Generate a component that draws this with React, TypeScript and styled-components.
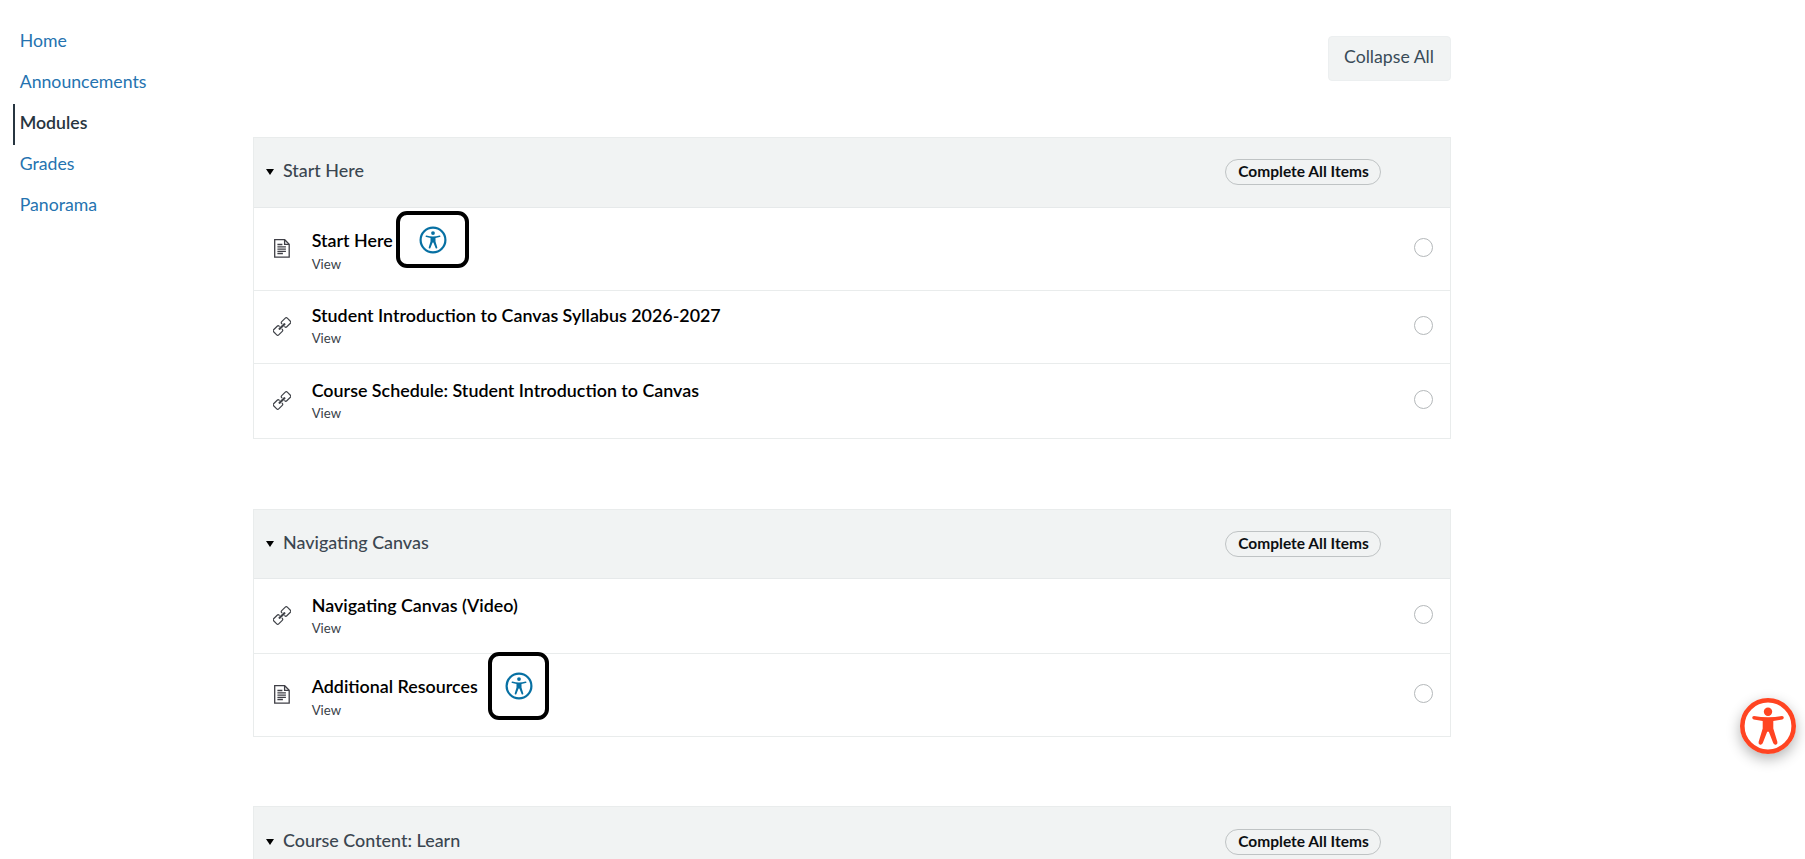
import React from 'react';
import styled, { createGlobalStyle } from 'styled-components';

const GlobalStyle = createGlobalStyle`
  *, *::before, *::after { box-sizing: border-box; }
  body {
    margin: 0;
    background: #fff;
    color: #273540;
    font-family: Lato, "Liberation Sans", sans-serif;
    font-size: 17.6px;
    overflow: hidden;
  }
`;

const Page = styled.div`
  display: flex;
  align-items: flex-start;
  height: 859px;
  overflow: hidden;
`;

const Sidebar = styled.nav`
  flex: 0 0 252.5px;
  display: flex;
  flex-direction: column;
  padding: 22.5px 0 0 13px;
`;

const NavLink = styled.a<{ $active?: boolean }>`
  display: flex;
  align-items: center;
  height: 40.9px;
  padding: 0 0 4.5px 4.7px;
  border-left: 2px solid ${p => (p.$active ? '#273540' : 'transparent')};
  color: ${p => (p.$active ? '#273540' : '#2573b0')};
  font-size: 17.7px;
  font-weight: ${p => (p.$active ? 600 : 400)};
  text-decoration: none;
`;

const Content = styled.main`
  width: 1198px;
  padding-top: 36px;
`;

const Toolbar = styled.div`
  display: flex;
  justify-content: flex-end;
  margin-bottom: 56px;
`;

const CollapseButton = styled.button`
  width: 123px;
  height: 45px;
  padding: 0 0 4px;
  border: 1px solid #eceff0;
  border-radius: 4px;
  background: #f1f3f3;
  color: #394b58;
  font: inherit;
  font-size: 17.7px;
`;

const Module = styled.section<{ $gap: number }>`
  margin-bottom: ${p => p.$gap}px;
  border: 1px solid #e9ecec;
`;

const ModuleHeader = styled.header<{ $height: number; $lift: number }>`
  display: flex;
  align-items: center;
  height: ${p => p.$height}px;
  padding: 0 68.5px ${p => p.$lift}px 12.5px;
  background: #f1f3f3;
  border-bottom: 1px solid #e6e9ea;
`;

const Caret = styled.svg`
  width: 8px;
  height: 6px;
  margin-right: 9px;
`;

const ModuleName = styled.h2`
  flex: 1;
  margin: 0;
  padding-bottom: 3.5px;
  color: #3b4650;
  font-size: 17.93px;
  font-weight: 500;
  line-height: 22px;
`;

const Pill = styled.span`
  display: flex;
  align-items: center;
  justify-content: center;
  width: 156px;
  height: 26px;
  padding: 0 0 2px 1px;
  border: 1px solid #bfc3c4;
  border-radius: 13px;
  color: #0c0f12;
  font-size: 15.5px;
  font-weight: 700;
`;

const ItemRow = styled.div<{ $height: number }>`
  position: relative;
  display: flex;
  align-items: center;
  height: ${p => p.$height}px;
  padding: 0 17px 0 19.5px;
  background: #fff;

  & + & { border-top: 1px solid #e9ecec; }
`;

const IconSlot = styled.span`
  display: flex;
  justify-content: center;
  width: 18px;
  margin: 0 20.7px 2px 0;
`;

const ItemText = styled.div<{ $top: number }>`
  flex: 1;
  align-self: flex-start;
  padding-top: ${p => p.$top}px;
`;

const ItemTitle = styled.div`
  color: #000;
  font-size: 17.88px;
  font-weight: 600;
  line-height: 22px;
`;

const Requirement = styled.div<{ $tall: boolean }>`
  margin-top: ${p => (p.$tall ? 4 : 3)}px;
  color: #394148;
  font-size: 13.2px;
  line-height: 18px;
`;

const StatusCircle = styled.span`
  width: 19px;
  height: 19px;
  margin-bottom: 3px;
  border: 1.5px solid #b4b8ba;
  border-radius: 50%;
`;

const Highlight = styled.span<{ $x: number; $y: number; $w: number; $h: number }>`
  position: absolute;
  z-index: 1;
  left: ${p => p.$x - 0.5}px;
  top: ${p => p.$y}px;
  width: ${p => p.$w}px;
  height: ${p => p.$h}px;
  display: flex;
  align-items: center;
  justify-content: center;
  border: 4px solid #000;
  border-radius: 11px;
  background: #fff;
`;

const AccessibilityButton = styled.button`
  position: fixed;
  right: 9px;
  top: 697.5px;
  width: 56px;
  height: 56px;
  padding: 0;
  border: 0;
  border-radius: 50%;
  background: #fff;
  box-shadow: 0 5px 14px rgba(0, 0, 0, 0.3);

  svg { display: block; }
`;

const PageIcon = () => (
  <svg width="16" height="19" viewBox="0 0 16 19" fill="none" stroke="#3f3f46" strokeWidth="1.3">
    <path d="M.7.7h10l4.5 4.5v13H.7z" />
    <path d="M10.6.9v4.4h4.4" />
    <path d="M3.4 5.5h5M3.4 7.8h8.5M3.4 10.1h8.5M3.4 12.4h8.5M3.4 14.5h5.5" strokeWidth="1.3" />
  </svg>
);

const LinkIcon = () => (
  <svg width="19" height="19" viewBox="0 0 19 19" fill="none" stroke="#3f4248" strokeWidth="1.25" strokeLinejoin="round">
    <g transform="rotate(-45 9.5 9.5)">
      <path d="M7.6 11.2v.6q0 1.5-1.5 1.5H.8q-1.5 0-1.5-1.5V7.2Q-.7 5.7.8 5.7H6.1q1.5 0 1.5 1.5v.6" />
      <path d="M11.4 7.8v-.6q0-1.5 1.5-1.5h5.3q1.5 0 1.5 1.5v4.6q0 1.5-1.5 1.5H12.9q-1.5 0-1.5-1.5v-.6" />
      <path d="M5.6 9h7.8v1H5.6z" />
    </g>
  </svg>
);

const PersonIcon = () => (
  <svg width="28" height="28" viewBox="-14 -14 28 28">
    <circle r="12.4" fill="none" stroke="#0770a3" strokeWidth="2.2" />
    <circle cy="-6.9" r="1.9" fill="#0770a3" />
    <path
      d="M-6.5-4.4Q0-2.7 6.5-4.4Q7.5-4.5 7.4-3.6Q7.3-3.1 6.7-2.9L2.5-2V1.4L4.3 7.4Q4.4 8.4 3.6 8.5Q2.9 8.6 2.6 7.9L.4 2.6H-.4L-2.6 7.9Q-2.9 8.6-3.6 8.5Q-4.4 8.4-4.3 7.4L-2.5 1.4V-2L-6.7-2.9Q-7.3-3.1-7.4-3.6Q-7.5-4.5-6.5-4.4Z"
      fill="#0770a3"
    />
  </svg>
);

type Item = {
  title: string;
  kind: 'page' | 'link';
  height: number;
  top: number;
  mark?: [number, number, number, number];
};

type ModuleData = { name: string; headerHeight: number; lift: number; gap: number; items: Item[] };

const modules: ModuleData[] = [
  {
    name: 'Start Here',
    headerHeight: 70,
    lift: 2,
    gap: 70,
    items: [
      { title: 'Start Here', kind: 'page', height: 82, top: 21, mark: [143, 3, 73, 57] },
      { title: 'Student Introduction to Canvas Syllabus 2026-2027', kind: 'link', height: 73, top: 13 },
      { title: 'Course Schedule: Student Introduction to Canvas', kind: 'link', height: 75, top: 14.5 },
    ],
  },
  {
    name: 'Navigating Canvas',
    headerHeight: 69,
    lift: 0,
    gap: 69,
    items: [
      { title: 'Navigating Canvas (Video)', kind: 'link', height: 74, top: 15 },
      { title: 'Additional Resources', kind: 'page', height: 83, top: 21, mark: [235, -2, 61, 68] },
    ],
  },
  { name: 'Course Content: Learn', headerHeight: 70, lift: 0, gap: 0, items: [] },
];

const navItems = ['Home', 'Announcements', 'Modules', 'Grades', 'Panorama'];

export default function App() {
  return (
    <Page>
      <GlobalStyle />
      <Sidebar>
        {navItems.map(label => (
          <NavLink key={label} $active={label === 'Modules'}>{label}</NavLink>
        ))}
      </Sidebar>
      <Content>
        <Toolbar>
          <CollapseButton>Collapse All</CollapseButton>
        </Toolbar>
        {modules.map(m => (
          <Module key={m.name} $gap={m.gap}>
            <ModuleHeader $height={m.headerHeight} $lift={m.lift}>
              <Caret viewBox="0 0 8 6"><path d="M0 0h8L4 6z" /></Caret>
              <ModuleName>{m.name}</ModuleName>
              <Pill>Complete All Items</Pill>
            </ModuleHeader>
            {m.items.map(item => (
              <ItemRow key={item.title} $height={item.height}>
                <IconSlot>{item.kind === 'page' ? <PageIcon /> : <LinkIcon />}</IconSlot>
                <ItemText $top={item.top}>
                  <ItemTitle>{item.title}</ItemTitle>
                  <Requirement $tall={item.kind === 'page'}>View</Requirement>
                </ItemText>
                <StatusCircle />
                {item.mark && (
                  <Highlight $x={item.mark[0]} $y={item.mark[1]} $w={item.mark[2]} $h={item.mark[3]}>
                    <PersonIcon />
                  </Highlight>
                )}
              </ItemRow>
            ))}
          </Module>
        ))}
      </Content>
      <AccessibilityButton aria-label="Accessibility">
        <svg width="56" height="56" viewBox="-28 -28 56 56">
          <circle r="25.7" fill="#fff" stroke="#ff4422" strokeWidth="4.6" />
          <circle cy="-14.2" r="4.2" fill="#ff4422" />
          <path
            d="M-14-10Q0-7.5 14-10Q15.8-10 15.8-8.3Q15.7-7 14.3-6.6L5.3-5V2.5L9.4 16Q9.8 18.2 8 18.7Q6.2 19 5.3 17.3L.8 5.8H-.8L-5.3 17.3Q-6.2 19-8 18.7Q-9.8 18.2-9.4 16L-5.3 2.5V-5L-14.3-6.6Q-15.7-7-15.8-8.3Q-15.8-10-14-10Z"
            fill="#ff4422"
          />
        </svg>
      </AccessibilityButton>
    </Page>
  );
}
